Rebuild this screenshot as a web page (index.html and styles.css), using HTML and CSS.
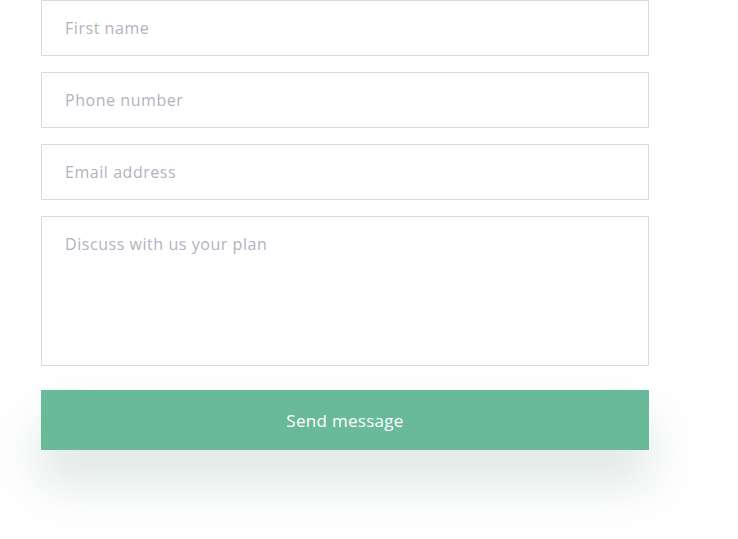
FILE: index.html
```html
<!DOCTYPE html>
<html lang="en">
<head>
<meta charset="utf-8">
<title>Contact</title>
<link rel="stylesheet" href="styles.css">
</head>
<body>
<form class="contact-form">
  <input class="field" type="text" placeholder="First name">
  <input class="field" type="tel" placeholder="Phone number">
  <input class="field" type="email" placeholder="Email address">
  <textarea class="field field-area" placeholder="Discuss with us your plan"></textarea>
  <button class="send-btn" type="button">Send message</button>
</form>
</body>
</html>
```
FILE: styles.css
```css
html, body {
  margin: 0;
  padding: 0;
  background: #ffffff;
}
body {
  font-family: "Open Sans", "Noto Sans", sans-serif;
  padding-bottom: 89px;
}
.contact-form {
  display: flex;
  flex-direction: column;
  gap: 16px;
  width: 608px;
  margin-left: 41px;
}
.field {
  box-sizing: border-box;
  width: 100%;
  height: 56px;
  margin: 0;
  padding: 0 23px;
  border: 1px solid #dcdcdc;
  border-radius: 0;
  background: #fff;
  font-family: inherit;
  font-size: 16px;
  letter-spacing: 0.55px;
  color: #555;
  outline: none;
}
.field::placeholder {
  color: #b2b2c0;
  opacity: 1;
}
.field-area {
  height: 150px;
  padding-top: 16px;
  resize: none;
  line-height: 22px;
}
.send-btn {
  margin-top: 8px;
  height: 60px;
  width: 100%;
  border: 0;
  background: #69b99b;
  color: #ffffff;
  font-family: inherit;
  font-size: 17px;
  letter-spacing: 0.3px;
  box-shadow: 0 32px 50px rgba(70, 115, 95, 0.19);
  cursor: pointer;
}
```
